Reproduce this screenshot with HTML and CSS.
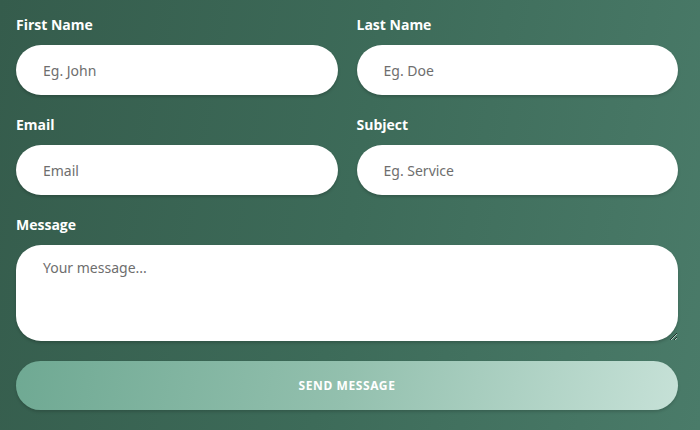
FILE: index.html
```html
<!DOCTYPE html>
<html lang="en">
<head>
  <meta charset="UTF-8" />
  <meta name="viewport" content="width=device-width, initial-scale=1.0" />
  <title>Contact</title>
  <link rel="stylesheet" href="styles.css">
</head>
<body>
  <form class="contact-form">
    <div class="field">
      <label for="firstName">First Name</label>
      <input type="text" id="firstName" placeholder="Eg. John" />
    </div>
    <div class="field">
      <label for="lastName">Last Name</label>
      <input type="text" id="lastName" placeholder="Eg. Doe" />
    </div>
    <div class="field">
      <label for="email">Email</label>
      <input type="email" id="email" placeholder="Email" />
    </div>
    <div class="field">
      <label for="subject">Subject</label>
      <input type="text" id="subject" placeholder="Eg. Service" />
    </div>
    <!-- Message spans both columns -->
    <div class="field full">
      <label for="message">Message</label>
      <textarea id="message" placeholder="Your message..."></textarea>
    </div>
    <button type="submit" class="send-btn full">Send Message</button>
  </form>
</body>
</html>
```

FILE: styles.css
```css
body {
  margin: 0;
  min-height: 430px;
  font-family: 'Open Sans', 'Noto Sans', sans-serif;
  background: linear-gradient(100deg, #355c4c 0%, #3d6b59 50%, #4a7b69 100%);
  color: white;
}
.contact-form {
  display: grid;
  grid-template-columns: 1fr 1fr;
  column-gap: 19px;
  row-gap: 20px;
  padding: 15px 22px 20px 16px;
}
.field label {
  display: block;
  font-size: 14px;
  font-weight: bold;
  line-height: 20px;
  margin-bottom: 10px;
}
.full {
  grid-column: 1 / span 2;
}
input, textarea {
  display: block;
  box-sizing: border-box;
  width: 100%;
  border: none;
  background: white;
  font-family: 'Noto Sans', 'Open Sans', sans-serif;
  font-size: 14px;
  color: #333;
  outline: none;
  box-shadow: 0 2px 3px rgba(0, 0, 0, 0.18);
}
input {
  height: 50px;
  padding: 0 27px;
  border-radius: 25px;
}
textarea {
  height: 96px;
  padding: 13px 27px;
  border-radius: 25px;
  resize: vertical;
}
input::placeholder, textarea::placeholder {
  color: #6e6e6e;
}
.send-btn {
  height: 49px;
  border: none;
  border-radius: 25px;
  background: linear-gradient(100deg, #6fa993 0%, #93c0ae 50%, #c6e1d7 100%);
  color: white;
  font-family: 'Noto Sans', 'Open Sans', sans-serif;
  font-size: 12px;
  font-weight: bold;
  letter-spacing: 0.6px;
  text-transform: uppercase;
  cursor: pointer;
  box-shadow: 0 2px 3px rgba(0, 0, 0, 0.15);
}
```
